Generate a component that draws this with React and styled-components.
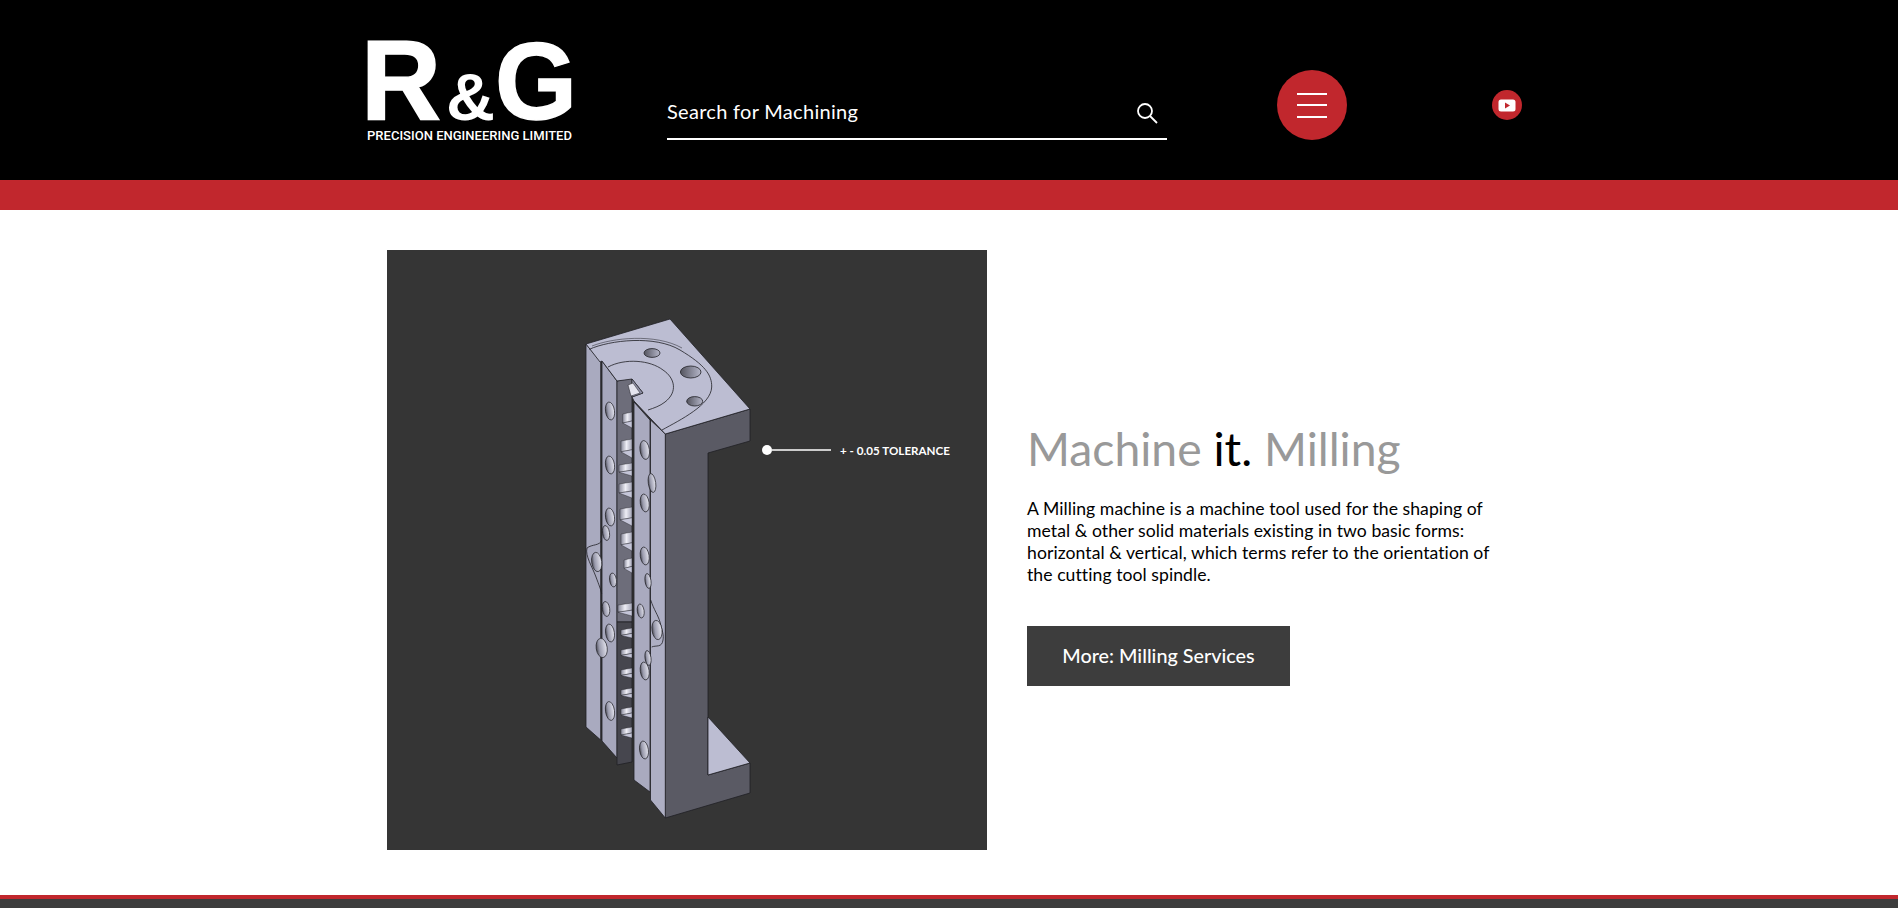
import React from 'react';
import styled, { createGlobalStyle } from 'styled-components';

const Global = createGlobalStyle`
  html, body { margin: 0; padding: 0; background: #fff; overflow: hidden; }
  body { font-family: Lato, "Liberation Sans", sans-serif; }
`;

const Page = styled.div`width: 1898px; height: 908px; display: flex; flex-direction: column;`;
const Header = styled.header`
  height: 180px; box-sizing: border-box; background: #000; display: flex; align-items: flex-end;
  padding: 0 0 40px 357px;
`;
const LogoSvg = styled.svg`display: block; width: 226px; height: 140px; margin: 0 84px -10px 0;`;
const Search = styled.form`
  width: 500px; height: 70px; box-sizing: border-box; border-bottom: 2px solid #fff; margin: 0 110px 0 0;
  display: flex; align-items: center; justify-content: space-between; padding: 14px 9px 0 0;
`;
const SearchText = styled.span`color: #fff; font-size: 20px; letter-spacing: 0.3px; margin-top: -1px;`;
const SearchIcon = styled.svg`display: block; margin-top: 3px; fill: none; stroke: #fff; stroke-width: 1.8;`;
const Burger = styled.button`
  width: 70px; height: 70px; border: 0; padding: 0; border-radius: 50%; background: #c1272d; margin-right: 145px;
  display: flex; flex-direction: column; align-items: center; justify-content: center; gap: 9.5px;
`;
const BurgerLine = styled.span`display: block; width: 30px; height: 2px; background: #fff;`;
const Social = styled.a`
  width: 30px; height: 30px; border-radius: 50%; background: #c1272d; margin-bottom: 20px;
  display: flex; align-items: center; justify-content: center;
`;
const RedBand = styled.div`height: 30px; background: #c1272d;`;
const Main = styled.main`display: flex; align-items: center; gap: 40px; padding: 40px 0 45px 387px;`;
const Figure = styled.div`position: relative; width: 600px; height: 600px; background: #353535; flex: none;`;
const PartSvg = styled.svg`display: block; width: 600px; height: 600px;`;
const Callout = styled.div`
  position: absolute; left: 375px; top: 195px; display: flex; align-items: center; height: 10px;
`;
const CalloutDot = styled.span`width: 10px; height: 10px; border-radius: 50%; background: #fff; flex: none;`;
const CalloutLine = styled.span`width: 59px; height: 2px; background: #ccc; flex: none;`;
const CalloutText = styled.span`
  color: #fff; font-size: 11.6px; font-weight: 700; margin-left: 9px; white-space: nowrap; letter-spacing: 0.02px;
`;
const Copy = styled.section`width: 470px; padding-top: 4px;`;
const Title = styled.h1`
  margin: 0 0 21px; font-size: 46.3px; line-height: 58px; font-weight: 400; color: #999; white-space: nowrap;
`;
const Accent = styled.span`color: #000;`;
const Body = styled.p`margin: 0 0 40px; font-size: 17.6px; line-height: 22px; color: #000; letter-spacing: 0.06px;`;
const More = styled.a`
  display: flex; align-items: center; justify-content: center; width: 263px; height: 60px; padding-bottom: 2px; box-sizing: border-box;
  background: #3d3d3d; color: #fff; font-size: 19.8px; font-weight: 500;
`;
const FooterBar = styled.footer`height: 13px; box-sizing: border-box; background: #3d3d3d; border-top: 4px solid #c1272d;`;

const Logo = () => (
  <LogoSvg viewBox="-10 -30 226 140" aria-label="R&G Precision Engineering Limited">
    <g fill="#fff" fontFamily="Liberation Sans, sans-serif" fontWeight="700">
      <text x="-6" y="80" fontSize="113" textLength="80" lengthAdjust="spacingAndGlyphs" stroke="#fff" strokeWidth="1.5">R</text>
      <text x="79" y="80" fontSize="66" textLength="49" lengthAdjust="spacingAndGlyphs">&amp;</text>
      <text x="128" y="78.5" fontSize="110" textLength="82" lengthAdjust="spacingAndGlyphs" stroke="#fff" strokeWidth="1.5">G</text>
      <text x="0" y="100" fontSize="12" textLength="205" lengthAdjust="spacingAndGlyphs" fontWeight="500" fontFamily="Roboto, sans-serif">PRECISION ENGINEERING LIMITED</text>
    </g>
  </LogoSvg>
);

const pts = a => a.map(p => p.join(',')).join(' ');
const holes = [
  [610,411,4.5,9],[610,465,4.5,9],[644.7,450,4.7,9.5],[652,483,3.7,9.5],[610,517,4.5,9],[606,533,3.5,7.5],
  [596.7,562,5,9.7],[613,580,3.4,7],[606,609,3.7,7.5],[610,633,4.4,9],[601.7,648,5.5,9.7],[610,711,4.5,9.5],
  [644.7,503,4.4,9],[644.7,556,4.4,9],[648,581,3,7.5],[640.7,611,3.4,7],[657,630,5,9.7],[648,658,3,7.5],
  [644.7,671,4.4,9],[644,750,4.4,9],
];
const teeth = [
  [622.7,412,15],[621,439,18],[619,463,12],[619,482,15],[620,507,18],[621,532,18],[624,558,14],[618,603,12],
  [621,628,9],[621,648,9],[621,668,9],[621,688,9],[621,707,10],[621,727,10],
];

const Part = () => (
  <PartSvg viewBox="387 250 600 600" aria-hidden="true">
    <defs>
      <linearGradient id="hole" x1="0" x2="1" y1="0" y2="0">
        <stop offset="0" stopColor="#4b4b55" />
        <stop offset="0.3" stopColor="#9a9bad" />
        <stop offset="1" stopColor="#e6e6f0" />
      </linearGradient>
      <linearGradient id="topHole" x1="0" x2="1" y1="0" y2="0">
        <stop offset="0" stopColor="#54545e" />
        <stop offset="0.6" stopColor="#8e8f9f" />
        <stop offset="1" stopColor="#b5b6c8" />
      </linearGradient>
      <linearGradient id="tooth" x1="0" x2="1" y1="0" y2="0">
        <stop offset="0" stopColor="#8a8b9c" />
        <stop offset="0.5" stopColor="#eeeef6" />
        <stop offset="1" stopColor="#a5a6b8" />
      </linearGradient>
    </defs>
    <g stroke="#1f1f24" strokeWidth="0.8" strokeLinejoin="round">
      <polygon fill="#5a5a64" points={pts([[665.3,434],[750,409],[750,441],[708,453],[708,775],[750,763],[750,793],[665.3,818]])} />
      <polygon fill="#bcbdd2" points={pts([[708,717],[750,763],[708,775]])} />
      <polygon fill="#a9aabf" points={pts([[586,344],[600.7,361.7],[600.7,740],[586,727]])} />
      <polygon fill="#a6a7bc" points={pts([[602,361],[617,381],[617,758],[602,741]])} />
      <polygon fill="#6d6d7a" points={pts([[617,381],[632,378],[632,622],[617,622]])} />
      <polygon fill="#46464e" points={pts([[617,622],[632,622],[632,762],[617,765]])} />
      <polygon fill="#a9aabf" points={pts([[634,402],[650,420],[650,792],[634,780]])} />
      <polygon fill="#aeafc4" points={pts([[650.5,420],[665.3,434],[665.3,818],[650.5,800]])} />
      <polygon fill="#bcbdd2" points={pts([[586,344],[670,319],[750,409],[665.3,434],[650,418],[634,401],[632,397],[643,393],[632,379],[617,381],[602,361],[600,362]])} />
      <polygon fill="#8f90a6" points={pts([[632,379],[643,393],[632,397]])} strokeWidth="0.6" />
      <polygon fill="#e4e4ee" points={pts([[628,385],[633,383],[640,393],[631,396]])} strokeWidth="0.5" />
      <g strokeWidth="0.4">
        {teeth.map(([x, y, h]) => (
          <g key={y}>
            <polygon fill="url(#tooth)" points={pts([[x,y+2],[632,y],[632,y+h*0.6],[x,y+h*0.6+2]])} />
            <polygon fill="#c4c5d8" points={pts([[x,y+h*0.6+2],[632,y+h*0.6],[632,y+h+1]])} />
          </g>
        ))}
      </g>
      <path fill="none" d="M589.3 349.3 C610 340 655 335 680 350 C705 365 712 375 711.7 387 C711 405 680 420 662 430" />
      <path fill="none" strokeWidth="0.5" d="M592 346 C612 338 655 333 682 348" />
      <path fill="none" d="M608 367 C625 358 650 360 663 370 C675 378 678 392 665 402 C660 406 654 408 648 410" />
      <path fill="none" d="M601.7 540 C600 546 592 544 587 548 C585 556 592 566 596 577 C599 585 601 590 601.7 594" />
      <path fill="none" d="M650.7 600 C654 610 658 615 660 622 C662 630 664 635 663 640 C662 648 656 645 651.7 647" />
      <ellipse cx="652" cy="353" rx="8" ry="4.4" fill="url(#topHole)" />
      <ellipse cx="690.7" cy="372" rx="10.3" ry="6" fill="url(#topHole)" />
      <ellipse cx="694.7" cy="401.3" rx="8" ry="4.7" fill="url(#topHole)" />
      {holes.map(([cx, cy, rx, ry]) => (
        <ellipse key={cx + '-' + cy} cx={cx} cy={cy} rx={rx} ry={ry} fill="url(#hole)" strokeWidth="0.7" transform={`rotate(-8 ${cx} ${cy})`} />
      ))}
    </g>
  </PartSvg>
);

export default function App() {
  return (
    <Page>
      <Global />
      <Header>
        <Logo />
        <Search>
          <SearchText>Search for Machining</SearchText>
          <SearchIcon width="22" height="22" viewBox="0 0 22 22" aria-hidden="true">
            <circle cx="9" cy="9" r="7" />
            <path d="M14 14 L21 21" />
          </SearchIcon>
        </Search>
        <Burger aria-label="Menu">
          <BurgerLine /><BurgerLine /><BurgerLine />
        </Burger>
        <Social aria-label="YouTube">
          <svg width="18" height="13" viewBox="0 0 18 13" aria-hidden="true">
            <rect width="17" height="12" x="0.5" y="0.5" rx="2.5" fill="#fff" />
            <path d="M7 3.5 L12 6.5 L7 9.5 Z" fill="#c1272d" />
          </svg>
        </Social>
      </Header>
      <RedBand />
      <Main>
        <Figure>
          <Part />
          <Callout>
            <CalloutDot />
            <CalloutLine />
            <CalloutText>+ - 0.05 TOLERANCE</CalloutText>
          </Callout>
        </Figure>
        <Copy>
          <Title>Machine <Accent>it.</Accent> Milling</Title>
          <Body>
            A Milling machine is a machine tool used for the shaping of metal &amp; other solid materials existing in two basic forms: horizontal &amp; vertical, which terms refer to the orientation of the cutting tool spindle.
          </Body>
          <More>More: Milling Services</More>
        </Copy>
      </Main>
      <FooterBar />
    </Page>
  );
}
